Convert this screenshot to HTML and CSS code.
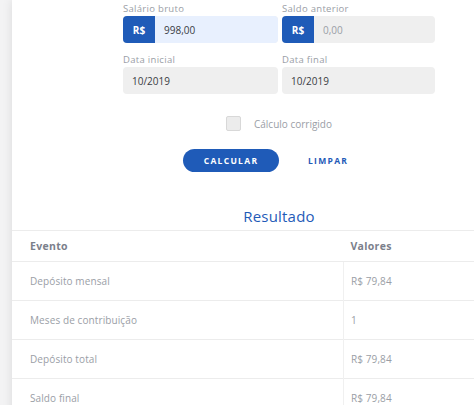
FILE: index.html
```html
<!DOCTYPE html>
<html lang="pt-BR">
<head>
<meta charset="utf-8">
<link rel="stylesheet" href="styles.css">
</head>
<body>
<div class="card">
  <form class="form">
    <div class="grid">
      <div class="field">
        <label class="label">Salário bruto</label>
        <div class="group">
          <span class="prefix">R$</span>
          <span class="input input-active">998,00</span>
        </div>
      </div>
      <div class="field">
        <label class="label">Saldo anterior</label>
        <div class="group">
          <span class="prefix">R$</span>
          <span class="input input-muted">0,00</span>
        </div>
      </div>
      <div class="field">
        <label class="label">Data inicial</label>
        <div class="group">
          <span class="input">10/2019</span>
        </div>
      </div>
      <div class="field">
        <label class="label">Data final</label>
        <div class="group">
          <span class="input">10/2019</span>
        </div>
      </div>
    </div>
    <div class="check-row">
      <span class="checkbox"></span>
      <span class="check-label">Cálculo corrigido</span>
    </div>
    <div class="buttons">
      <span class="btn btn-primary">CALCULAR</span>
      <span class="btn btn-link">LIMPAR</span>
    </div>
  </form>
  <h2 class="title">Resultado</h2>
  <table class="table">
    <thead>
      <tr><th class="col-a">Evento</th><th class="col-b">Valores</th></tr>
    </thead>
    <tbody>
      <tr><td class="col-a">Depósito mensal</td><td class="col-b">R$ 79,84</td></tr>
      <tr><td class="col-a">Meses de contribuição</td><td class="col-b">1</td></tr>
      <tr><td class="col-a">Depósito total</td><td class="col-b">R$ 79,84</td></tr>
      <tr><td class="col-a">Saldo final</td><td class="col-b">R$ 79,84</td></tr>
    </tbody>
  </table>
</div>
</body>
</html>
```
FILE: styles.css
```css
html, body {
  margin: 0;
  padding: 0;
  overflow: hidden;
  height: 100%;
}
body {
  background: #f3f3f4;
  font-family: "Open Sans", "Noto Sans", sans-serif;
}
.card {
  margin-left: 12px;
  min-height: 100%;
  background: #fff;
  box-shadow: 0 0 10px rgba(0, 0, 0, 0.1);
}
.form {
  width: 312px;
  margin-left: 111px;
  padding-top: 2px;
}
.grid {
  display: grid;
  grid-template-columns: 155px 153px;
  column-gap: 4px;
  row-gap: 10px;
}
.label {
  display: block;
  font-size: 9.5px;
  line-height: 14px;
  letter-spacing: 0.3px;
  color: #9a9ea6;
}
.group {
  display: flex;
  height: 27px;
  border-radius: 4px;
  overflow: hidden;
  background: #efefef;
}
.prefix {
  width: 32px;
  flex: none;
  background: #1f5bb8;
  color: #fff;
  font-weight: 700;
  font-size: 10px;
  display: flex;
  align-items: center;
  justify-content: center;
}
.input {
  flex: 1;
  display: flex;
  align-items: center;
  padding-left: 9px;
  font-size: 10px;
  color: #3a3d44;
}
.input-active {
  background: #e8f0fe;
}
.input-muted {
  color: #9a9ea6;
}
.check-row {
  display: flex;
  align-items: center;
  justify-content: center;
  gap: 13px;
  margin-top: 22px;
}
.checkbox {
  width: 13px;
  height: 13px;
  border: 1px solid #d8d8d8;
  border-radius: 2px;
  background: #ececec;
}
.check-label {
  font-size: 10px;
  color: #9a9ea6;
}
.buttons {
  display: flex;
  align-items: center;
  gap: 29px;
  margin-top: 18px;
  padding-left: 60px;
}
.btn {
  font-size: 8.5px;
  font-weight: 700;
  letter-spacing: 1.3px;
}
.btn-primary {
  width: 96px;
  height: 23px;
  border-radius: 12px;
  background: #1f5bb8;
  color: #fff;
  display: flex;
  align-items: center;
  justify-content: center;
}
.btn-link {
  color: #1f5bb8;
}
.title {
  margin: 34px 0 0;
  padding-left: 72px;
  text-align: center;
  font-size: 15px;
  line-height: 20px;
  font-weight: 400;
  letter-spacing: 0.2px;
  color: #1f5bb8;
}
.table {
  width: 100%;
  margin-top: 4px;
  border-collapse: collapse;
}
.table th, .table td {
  text-align: left;
  padding: 0 0 0 18px;
  border-top: 1px solid #ececec;
}
.table th {
  height: 30px;
  font-weight: 700;
  color: #7b808b;
  letter-spacing: 0.3px;
  font-size: 10.5px;
}
.table td {
  height: 38px;
  color: #9a9ea6;
  font-size: 10px;
  letter-spacing: 0.1px;
}
.table .col-a {
  width: 313px;
}
.table td.col-b {
  border-left: 1px solid #f0f0f0;
  padding-left: 7px;
}
.table th.col-b {
  padding-left: 7px;
}
```
